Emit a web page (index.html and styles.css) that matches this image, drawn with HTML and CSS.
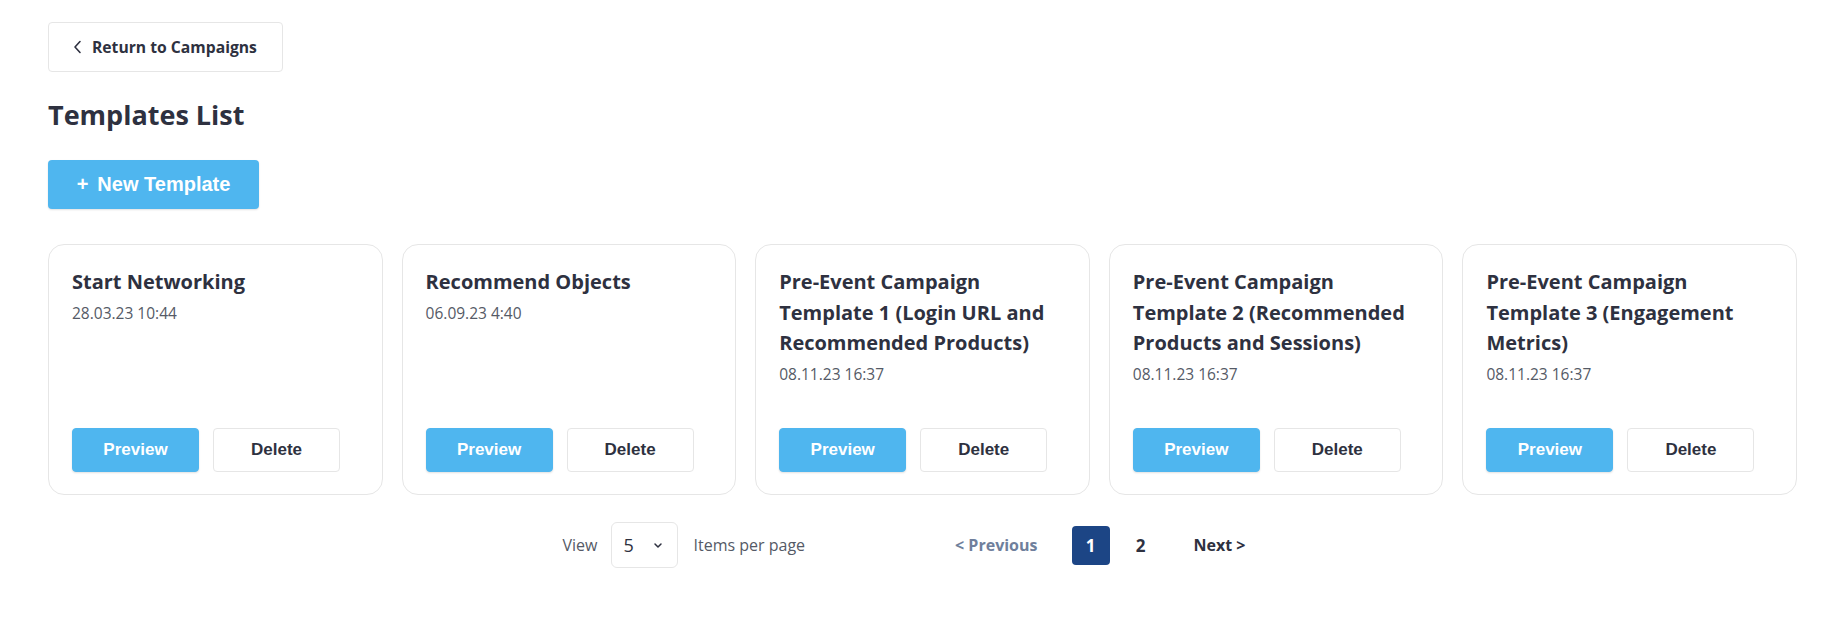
FILE: index.html
```html
<!DOCTYPE html>
<html lang="en">
<head>
<meta charset="utf-8">
<title>Templates List</title>
<link rel="stylesheet" href="styles.css">
</head>
<body>
<div class="page">
  <div class="top">
    <button class="back-btn">
      <svg class="back-icon" width="9" height="14" viewBox="0 0 9 14"><path d="M7 1.5 L2 7 L7 12.5" fill="none" stroke="#2e3140" stroke-width="1.6" stroke-linecap="round" stroke-linejoin="round"/></svg>
      <span>Return to Campaigns</span>
    </button>
  </div>
  <h1 class="title">Templates List</h1>
  <button class="new-btn"><span class="plus">+</span> New Template</button>

  <div class="cards">
    <div class="card">
      <div class="card-title">Start Networking</div>
      <div class="card-date">28.03.23 10:44</div>
      <div class="card-actions"><button class="btn btn-primary">Preview</button><button class="btn btn-outline">Delete</button></div>
    </div>
    <div class="card">
      <div class="card-title">Recommend Objects</div>
      <div class="card-date">06.09.23 4:40</div>
      <div class="card-actions"><button class="btn btn-primary">Preview</button><button class="btn btn-outline">Delete</button></div>
    </div>
    <div class="card">
      <div class="card-title">Pre-Event Campaign Template 1 (Login URL and Recommended Products)</div>
      <div class="card-date">08.11.23 16:37</div>
      <div class="card-actions"><button class="btn btn-primary">Preview</button><button class="btn btn-outline">Delete</button></div>
    </div>
    <div class="card">
      <div class="card-title">Pre-Event Campaign Template 2 (Recommended Products and Sessions)</div>
      <div class="card-date">08.11.23 16:37</div>
      <div class="card-actions"><button class="btn btn-primary">Preview</button><button class="btn btn-outline">Delete</button></div>
    </div>
    <div class="card">
      <div class="card-title">Pre-Event Campaign Template 3 (Engagement Metrics)</div>
      <div class="card-date">08.11.23 16:37</div>
      <div class="card-actions"><button class="btn btn-primary">Preview</button><button class="btn btn-outline">Delete</button></div>
    </div>
  </div>

  <div class="pager-row">
    <div class="per-page">
      <span class="muted">View</span>
      <div class="select"><span class="select-val">5</span>
        <svg width="10" height="7" viewBox="0 0 10 7"><path d="M2 2 L5 5 L8 2" fill="none" stroke="#2e3140" stroke-width="1.5" stroke-linecap="round" stroke-linejoin="round"/></svg>
      </div>
      <span class="muted">Items per page</span>
    </div>
    <div class="pager">
      <span class="pg-prev">&lt; Previous</span>
      <span class="pg-num active">1</span>
      <span class="pg-num">2</span>
      <span class="pg-next">Next &gt;</span>
    </div>
  </div>
</div>
</body>
</html>
```

FILE: styles.css
```css
* { box-sizing: border-box; }
html, body { margin: 0; padding: 0; background: #ffffff; }
body {
  font-family: "Open Sans", "Noto Sans", sans-serif;
  color: #2e3140;
}
button { font-family: inherit; cursor: pointer; }

.page {
  padding: 22px 37px 0 48px;
}

.top { display: flex; }
.back-btn {
  display: flex;
  align-items: center;
  gap: 10px;
  width: 235px;
  height: 50px;
  padding: 0 0 0 24px;
  background: #fff;
  border: 1px solid #e6e6e6;
  border-radius: 4px;
  font-size: 15.7px;
  font-weight: 700;
  color: #2e3140;
}
.back-icon { display: block; }

.title {
  margin: 25px 0 0;
  font-size: 27px;
  line-height: 36px;
  font-weight: 700;
  color: #2e3140;
}

.new-btn {
  display: flex;
  align-items: center;
  justify-content: center;
  gap: 9px;
  margin-top: 27px;
  width: 211px;
  height: 49px;
  border: none;
  border-radius: 4px;
  background: #4fb6ef;
  color: #fff;
  font-family: "Liberation Sans", Arial, sans-serif;
  font-size: 20px;
  font-weight: 700;
  box-shadow: 0 1px 2px rgba(0,0,0,0.12);
}
.plus { font-size: 20px; }

.cards {
  display: grid;
  grid-template-columns: repeat(5, 1fr);
  gap: 19px;
  margin-top: 35px;
}
.card {
  display: flex;
  flex-direction: column;
  border: 1px solid #e6e6e6;
  border-radius: 16px;
  padding: 22px 23px 22px 23px;
  min-height: 251px;
}
.card-title {
  font-size: 20px;
  line-height: 30.5px;
  font-weight: 700;
  color: #2e3140;
}
.card-date {
  margin-top: 3px;
  font-size: 15.5px;
  line-height: 24px;
  color: #555a66;
}
.card-actions {
  margin-top: auto;
  padding-top: 40px;
  display: flex;
  gap: 14px;
}
.btn {
  width: 127px;
  height: 44px;
  border-radius: 4px;
  font-family: "Liberation Sans", Arial, sans-serif;
  font-size: 17px;
  font-weight: 700;
}
.btn-primary {
  background: #4fb6ef;
  border: 1px solid #4fb6ef;
  color: #fff;
  box-shadow: 0 1px 2px rgba(0,0,0,0.12);
}
.btn-outline {
  background: #fff;
  border: 1px solid #e6e6e6;
  color: #2e3140;
}

.pager-row {
  display: flex;
  justify-content: center;
  align-items: center;
  gap: 150px;
  margin-top: 27px;
  padding-right: 37px;
}
.per-page {
  display: flex;
  align-items: center;
}
.muted {
  font-size: 16px;
  color: #555a66;
}
.select {
  display: flex;
  align-items: center;
  justify-content: space-between;
  width: 67px;
  height: 46px;
  margin: 0 15px 0 14px;
  padding: 0 14px 0 11px;
  border: 1px solid #e6e6e6;
  border-radius: 6px;
}
.select-val {
  font-size: 18px;
  color: #2e3140;
}
.pager {
  display: flex;
  align-items: center;
  gap: 12px;
}
.pg-prev, .pg-next {
  font-size: 16px;
  font-weight: 700;
}
.pg-prev { color: #6f7f9c; margin-right: 22px; }
.pg-next { color: #2e3140; margin-left: 22px; }
.pg-num {
  display: flex;
  align-items: center;
  justify-content: center;
  width: 38px;
  height: 39px;
  border-radius: 4px;
  font-size: 17px;
  font-weight: 700;
  color: #2e3140;
}
.pg-num.active {
  background: #1c4585;
  color: #fff;
}
```
